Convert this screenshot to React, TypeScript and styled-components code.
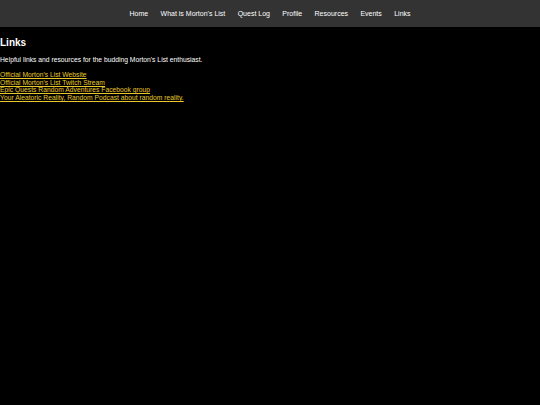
import React from "react";
import styled, { createGlobalStyle } from "styled-components";

const Global = createGlobalStyle`
  html, body { margin: 0; padding: 0; background: #000; }
  body { font-family: "Liberation Sans", Arial, sans-serif; color: #fff; }
`;

const NavBar = styled.nav`
  background: #333333;
  height: 27px;
  display: flex;
  justify-content: center;
  align-items: center;
`;

const NavLink = styled.a`
  color: #ffffff;
  text-decoration: none;
  font-size: 7px;
  padding: 0 6.2px;
`;

const Main = styled.main`
  padding: 0;
`;

const Heading = styled.h2`
  font-size: 10px;
  font-weight: bold;
  margin: 10px 0 7.5px 0;
  line-height: 11.5px;
`;

const Intro = styled.p`
  font-size: 6.75px;
  margin: 0 0 7px 0;
  line-height: 8px;
`;

const LinkList = styled.div`
  display: flex;
  flex-direction: column;
  align-items: flex-start;
`;

const GoldLink = styled.a`
  color: #e8c828;
  font-size: 6.75px;
  line-height: 7.7px;
  text-decoration: underline;
`;

const navItems = ["Home", "What is Morton's List", "Quest Log", "Profile", "Resources", "Events", "Links"];
const links = [
  "Official Morton's List Website",
  "Official Morton's List Twitch Stream",
  "Epic Quests Random Adventures Facebook group",
  "Your Aleatoric Reality, Random Podcast about random reality.",
];

export default function App() {
  return (
    <>
      <Global />
      <NavBar>
        {navItems.map((n) => (
          <NavLink key={n} href="#">{n}</NavLink>
        ))}
      </NavBar>
      <Main>
        <Heading>Links</Heading>
        <Intro>Helpful links and resources for the budding Morton's List enthusiast.</Intro>
        <LinkList>
          {links.map((l) => (
            <GoldLink key={l} href="#">{l}</GoldLink>
          ))}
        </LinkList>
      </Main>
    </>
  );
}
